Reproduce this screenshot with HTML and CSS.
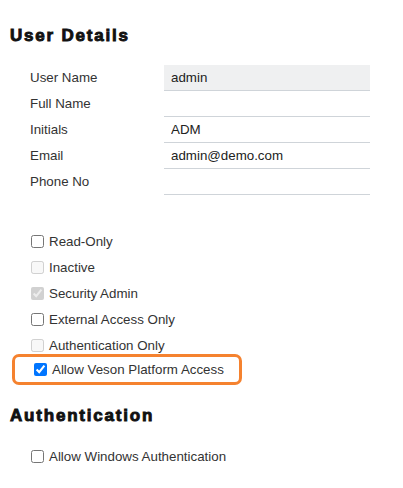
FILE: index.html
```html
<!DOCTYPE html>
<html>
<head>
<meta charset="utf-8">
<link rel="stylesheet" href="styles.css">
</head>
<body>
<div class="page">
  <h2 class="section-title">User Details</h2>
  <div class="form-grid">
    <label class="field-label">User Name</label>
    <input class="field-input readonly" type="text" value="admin" readonly>
    <label class="field-label">Full Name</label>
    <input class="field-input" type="text" value="">
    <label class="field-label">Initials</label>
    <input class="field-input" type="text" value="ADM">
    <label class="field-label">Email</label>
    <input class="field-input" type="text" value="admin@demo.com">
    <label class="field-label">Phone No</label>
    <input class="field-input" type="text" value="">
  </div>
  <div class="check-list">
    <label class="check-row"><input type="checkbox">Read-Only</label>
    <label class="check-row"><input type="checkbox" disabled>Inactive</label>
    <label class="check-row"><input type="checkbox" checked disabled>Security Admin</label>
    <label class="check-row"><input type="checkbox">External Access Only</label>
    <label class="check-row"><input type="checkbox" disabled>Authentication Only</label>
    <label class="check-row highlight"><input type="checkbox" checked>Allow Veson Platform Access</label>
  </div>
  <h2 class="section-title second">Authentication</h2>
  <div class="check-list auth">
    <label class="check-row"><input type="checkbox">Allow Windows Authentication</label>
  </div>
</div>
</body>
</html>
```
FILE: styles.css
```css
html, body {
  margin: 0;
  padding: 0;
  background: #ffffff;
}
body {
  font-family: "Liberation Sans", Arial, sans-serif;
  color: #333333;
}
.page {
  padding: 25px 0 0 10px;
}
.section-title {
  margin: 0;
  font-size: 17px;
  line-height: 22px;
  font-weight: 700;
  color: #111111;
  letter-spacing: 1.8px;
  -webkit-text-stroke: 0.9px #111111;
}
.form-grid {
  margin-top: 18px;
  margin-left: 20px;
  display: grid;
  grid-template-columns: 134px 206px;
  grid-auto-rows: 26px;
  align-items: stretch;
}
.field-label {
  font-size: 13.33px;
  line-height: 26px;
  color: #333333;
}
.field-input {
  box-sizing: border-box;
  height: 26px;
  margin: 0;
  border: none;
  border-bottom: 1px solid #cfd4d9;
  background: #ffffff;
  padding: 0 7px;
  font-family: "Liberation Sans", Arial, sans-serif;
  font-size: 13.33px;
  color: #222222;
  outline: none;
}
.field-input.readonly {
  background: #eff0f1;
}
.check-list {
  margin-top: 33px;
  margin-left: 17px;
  display: flex;
  flex-direction: column;
}
.check-row {
  display: flex;
  align-items: center;
  height: 26px;
  font-size: 13.33px;
  color: #333333;
}
.check-row input {
  margin: 0 5px 0 4px;
  width: 13px;
  height: 13px;
}
.check-row.highlight {
  box-sizing: border-box;
  width: 230px;
  height: 31px;
  margin: -4px 0 0 -15px;
  padding-left: 15px;
  border: 3px solid #f5822f;
  border-radius: 7px;
}
.section-title.second {
  margin-top: 20px;
}
.check-list.auth {
  margin-top: 16px;
}
```
